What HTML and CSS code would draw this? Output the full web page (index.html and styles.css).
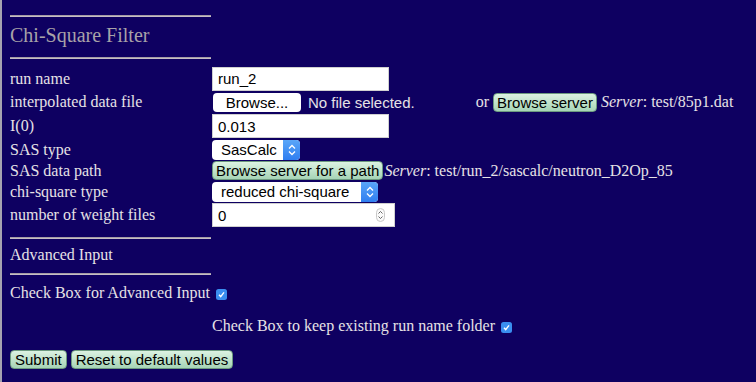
FILE: index.html
```html
<!DOCTYPE html>
<html lang="en">

<head>
    <meta charset="UTF-8">
    <meta name="viewport" content="width=device-width, initial-scale=1.0">
    <title>Chi-Square Filter</title>
    <link rel="stylesheet" href="styles.css">
</head>

<body>
    <div class="page">
        <hr class="rule">
        <h3 class="title">Chi-Square Filter</h3>
        <hr class="rule">

        <form class="form-grid" id="chiForm">
            <label class="field-label row-tall" for="runname">run name</label>
            <div class="field row-tall">
                <input class="text-input" type="text" id="runname" value="run_2">
            </div>

            <label class="field-label" for="datafile">interpolated data file</label>
            <div class="field">
                <button type="button" class="file-btn" id="datafile">Browse...</button>
                <span class="file-status">No file selected.</span>
                <span class="or-text">or</span>
                <button type="button" class="green-btn">Browse server</button>
                <span class="server-text"><em>Server</em>: test/85p1.dat</span>
            </div>

            <label class="field-label row-tall" for="izero">I(0)</label>
            <div class="field row-tall">
                <input class="text-input" type="text" id="izero" value="0.013">
            </div>

            <label class="field-label" for="sastype">SAS type</label>
            <div class="field">
                <span class="select-wrap sas-select">
                    <select id="sastype">
                        <option>SasCalc</option>
                    </select>
                    <span class="select-arrows"><svg width="8" height="12" viewBox="0 0 8 12"><path d="M1 4.5 L4 1.5 L7 4.5 M1 7.5 L4 10.5 L7 7.5" fill="none" stroke="#fff" stroke-width="1.3"/></svg></span>
                </span>
            </div>

            <label class="field-label" for="saspath">SAS data path</label>
            <div class="field">
                <button type="button" class="green-btn" id="saspath">Browse server for a path</button><span class="server-text tight"><em>Server</em>: test/run_2/sascalc/neutron_D2Op_85</span>
            </div>

            <label class="field-label" for="chitype">chi-square type</label>
            <div class="field">
                <span class="select-wrap chi-select">
                    <select id="chitype">
                        <option>reduced chi-square</option>
                    </select>
                    <span class="select-arrows"><svg width="8" height="12" viewBox="0 0 8 12"><path d="M1 4.5 L4 1.5 L7 4.5 M1 7.5 L4 10.5 L7 7.5" fill="none" stroke="#fff" stroke-width="1.3"/></svg></span>
                </span>
            </div>

            <label class="field-label row-tall" for="weights">number of weight files</label>
            <div class="field row-tall">
                <span class="number-wrap">
                    <input class="text-input number-input" type="text" id="weights" value="0">
                    <span class="spinner"><svg width="9" height="14" viewBox="0 0 9 14"><rect x="0.5" y="0.5" width="8" height="13" rx="4" fill="#fafafa" stroke="#c8c8c8"/><path d="M2.5 5.5 L4.5 3.5 L6.5 5.5 M2.5 8.5 L4.5 10.5 L6.5 8.5" fill="none" stroke="#555" stroke-width="0.9"/></svg></span>
                </span>
            </div>
        </form>

        <hr class="rule rule-gap">
        <div class="section-head">Advanced Input</div>
        <hr class="rule">

        <div class="check-line">
            Check Box for Advanced Input
            <span class="check-box"><svg width="11" height="11" viewBox="0 0 11 11"><rect width="11" height="11" rx="2.5" fill="#3a8ef0"/><path d="M3 5.8 L4.7 7.6 L8 3.4" fill="none" stroke="#fff" stroke-width="1.4"/></svg></span>
        </div>

        <div class="check-line keep-line">
            Check Box to keep existing run name folder
            <span class="check-box"><svg width="11" height="11" viewBox="0 0 11 11"><rect width="11" height="11" rx="2.5" fill="#3a8ef0"/><path d="M3 5.8 L4.7 7.6 L8 3.4" fill="none" stroke="#fff" stroke-width="1.4"/></svg></span>
        </div>

        <div class="actions">
            <button type="submit" class="green-btn" form="chiForm">Submit</button>
            <button type="reset" class="green-btn" form="chiForm">Reset to default values</button>
        </div>
    </div>
</body>

</html>
```

FILE: styles.css
```css
* {
    padding: 0;
    margin: 0;
    box-sizing: border-box;
}

body {
    background-color: #0e0061;
    font-family: "Liberation Serif", "Times New Roman", serif;
    font-size: 16px;
    color: #e6e2e6;
}

.page {
    height: 382px;
    border-left: 2px solid #a6a2b0;
    padding: 15px 0 0 8px;
}

.rule {
    width: 201px;
    height: 2px;
    border: none;
    border-top: 1px solid #a49ca4;
    border-bottom: 1px solid #c6bec6;
}

.title {
    height: 40px;
    line-height: 36px;
    font-size: 20px;
    font-weight: normal;
    color: #a8a2a8;
}

.form-grid {
    display: grid;
    grid-template-columns: 202px auto;
    grid-template-rows: 25px 22px 26px 21px 21px 21px 26px;
    margin-top: 7px;
}

.field-label {
    display: flex;
    align-items: center;
}

.field {
    display: flex;
    align-items: center;
    font-family: "Liberation Sans", Arial, sans-serif;
    font-size: 15px;
}

.text-input {
    width: 177px;
    height: 24px;
    padding: 0 5px;
    border: 1px solid #d0d0d0;
    background: #fff;
    color: #000;
    font-family: "Liberation Sans", Arial, sans-serif;
    font-size: 15px;
    outline: none;
}

.file-btn {
    width: 88px;
    height: 19px;
    margin-left: 1px;
    border: none;
    border-radius: 4px;
    background: #fff;
    color: #000;
    font-family: "Liberation Sans", Arial, sans-serif;
    font-size: 15px;
}

.file-status {
    margin-left: 7px;
    color: #e6e2e6;
    font-size: 15px;
}

.or-text {
    margin-left: 61px;
    font-family: "Liberation Serif", "Times New Roman", serif;
    font-size: 16px;
}

.or-text + .green-btn {
    margin-left: 4px;
}

.green-btn {
    height: 19px;
    padding: 0 3px;
    border: 1px solid #6d9a80;
    border-radius: 4px;
    background: linear-gradient(#dcf2e2, #a6d4b6);
    color: #000;
    font-family: "Liberation Sans", Arial, sans-serif;
    font-size: 15px;
    cursor: pointer;
}

.server-text {
    margin-left: 4px;
    font-family: "Liberation Serif", "Times New Roman", serif;
    font-size: 16px;
}

.server-text.tight {
    margin-left: 1px;
}

.select-wrap {
    position: relative;
    display: inline-block;
    height: 20px;
    border-radius: 4px;
    background: #fff;
}

.select-wrap select {
    appearance: none;
    width: 100%;
    height: 20px;
    padding-left: 9px;
    border: none;
    background: transparent;
    color: #000;
    font-family: "Liberation Sans", Arial, sans-serif;
    font-size: 15px;
    outline: none;
}

.sas-select {
    width: 88px;
}

.chi-select {
    width: 166px;
}

.select-arrows {
    position: absolute;
    top: 0;
    right: 0;
    width: 17px;
    height: 20px;
    border-radius: 0 4px 4px 0;
    background: linear-gradient(#5aa6f8, #2f7ef0);
    display: flex;
    align-items: center;
    justify-content: center;
}

.number-wrap {
    position: relative;
    display: inline-block;
}

.number-input {
    width: 183px;
}

.spinner {
    position: absolute;
    top: 5px;
    right: 10px;
    line-height: 0;
}

.rule-gap {
    margin-top: 9px;
}

.section-head {
    height: 34px;
    line-height: 31px;
}

.check-line {
    height: 36px;
    line-height: 36px;
    display: flex;
    align-items: center;
    gap: 6px;
}

.keep-line {
    height: 30px;
    margin-left: 202px;
}

.check-box {
    line-height: 0;
    margin-top: 2px;
}

.actions {
    display: flex;
    gap: 4px;
    margin-top: 9px;
}

.actions .green-btn {
    padding: 0 4px;
}
```
